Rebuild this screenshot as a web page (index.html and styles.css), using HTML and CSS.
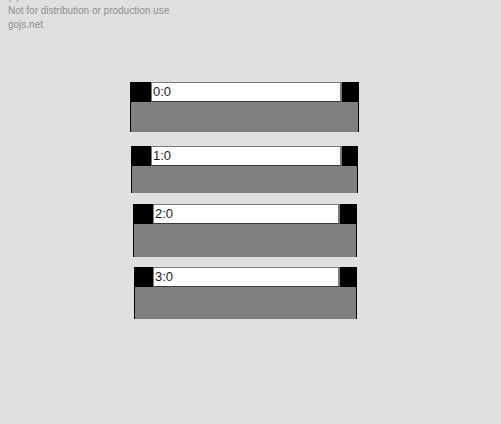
FILE: index.html
```html
<!DOCTYPE html>
<html>
<head>
<meta charset="utf-8">
<link rel="stylesheet" href="styles.css">
</head>
<body>
<div class="canvas">
  <div class="watermark">
    <div class="wm-line">(c) 1998-2021 Northwoods Software</div>
    <div class="wm-line">Not for distribution or production use</div>
    <div class="wm-line">gojs.net</div>
  </div>
  <div class="node n0">
    <div class="head"><span class="cap"></span><span class="box">0:0</span><span class="cap"></span></div>
    <div class="body"></div>
  </div>
  <div class="node n1">
    <div class="head"><span class="cap"></span><span class="box">1:0</span><span class="cap"></span></div>
    <div class="body"></div>
  </div>
  <div class="node n2">
    <div class="head"><span class="cap"></span><span class="box">2:0</span><span class="cap"></span></div>
    <div class="body"></div>
  </div>
  <div class="node n3">
    <div class="head"><span class="cap"></span><span class="box">3:0</span><span class="cap"></span></div>
    <div class="body"></div>
  </div>
</div>
</body>
</html>
```

FILE: styles.css
```css
html, body {
  margin: 0;
  padding: 0;
}
body {
  background: #e0e0e0;
  font-family: "Liberation Sans", Arial, sans-serif;
}
.canvas {
  position: relative;
  width: 501px;
  height: 424px;
  overflow: hidden;
}
.watermark {
  position: absolute;
  left: 8px;
  top: -10px;
  color: #8f8f8f;
  font-size: 10px;
  line-height: 14px;
}
.node {
  position: absolute;
  display: flex;
  flex-direction: column;
}
.head {
  display: grid;
  grid-template-columns: var(--l) 1fr var(--r);
  height: 20px;
  background: #000;
}
.box {
  background: #fff;
  border: 1px solid #7a7a7a;
  border-bottom-color: #3a3a3a;
  border-right-width: 2px;
  color: #1a1a1a;
  font-size: 13px;
  line-height: 17px;
  padding-left: 1px;
  box-sizing: border-box;
  height: 20px;
}
.body {
  flex: 1;
  background: #808080;
  border-left: 1px solid #000;
  border-right: 1px solid #000;
}
.n0 { left: 130px; top: 82px; width: 229px; height: 50px; --l: 21px; --r: 17px; }
.n1 { left: 131px; top: 146px; width: 227px; height: 47px; --l: 20px; --r: 16px; }
.n2 { left: 133px; top: 204px; width: 224px; height: 53px; --l: 20px; --r: 17px; }
.n3 { left: 134px; top: 267px; width: 223px; height: 52px; --l: 19px; --r: 17px; }
```
